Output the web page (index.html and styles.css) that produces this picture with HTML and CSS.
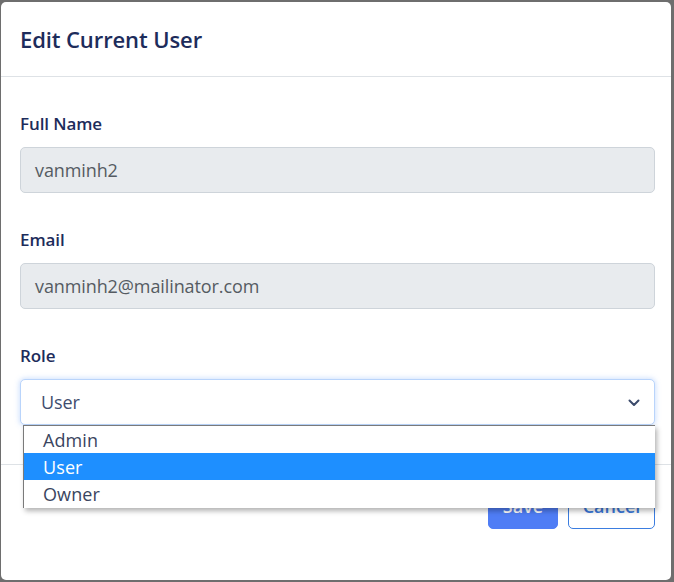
FILE: index.html
```html
<!DOCTYPE html>
<html lang="en">
<head>
<meta charset="utf-8">
<title>Edit Current User</title>
<link rel="stylesheet" href="styles.css">
</head>
<body>
<div class="modal">
  <div class="modal-header">
    <h5 class="modal-title">Edit Current User</h5>
  </div>
  <div class="modal-body">
    <div class="field">
      <label class="label">Full Name</label>
      <div class="input">vanminh2</div>
    </div>
    <div class="field">
      <label class="label">Email</label>
      <div class="input">vanminh2@mailinator.com</div>
    </div>
    <div class="field field-last">
      <label class="label">Role</label>
      <div class="select-wrap">
        <div class="select">
          <span>User</span>
          <svg class="chev" width="12" height="8" viewBox="0 0 12 8"><path d="M1.5 1.5 L6 6 L10.5 1.5" fill="none" stroke="#3b4a6b" stroke-width="2" stroke-linecap="round" stroke-linejoin="round"/></svg>
        </div>
        <ul class="options">
          <li class="opt">Admin</li>
          <li class="opt opt-active">User</li>
          <li class="opt">Owner</li>
        </ul>
      </div>
    </div>
  </div>
  <div class="modal-footer">
    <button class="btn btn-primary">Save</button>
    <button class="btn btn-outline">Cancel</button>
  </div>
</div>
</body>
</html>
```
FILE: styles.css
```css
* { box-sizing: border-box; }
html, body { margin: 0; height: 100%; }
body {
  background: #6e6e6e;
  padding: 2px 2px 2px 1px;
  font-family: "Open Sans", "Noto Sans", sans-serif;
}
.modal {
  background: #fff;
  border-radius: 5px;
  height: 578px;
  width: 670px;
  display: flex;
  flex-direction: column;
}
.modal-header {
  height: 75px;
  border-bottom: 1px solid #dee2e6;
  padding: 0 19px;
  display: flex;
  align-items: center;
}
.modal-title {
  margin: 0;
  margin-top: -1px;
  font-size: 22px;
  font-weight: 600;
  color: #1d2c5b;
  letter-spacing: -0.1px;
}
.modal-body {
  padding: 35px 16px 39px 19px;
}
.field { margin-bottom: 35px; }
.field-last { margin-bottom: 0; }
.label {
  display: block;
  font-size: 17px;
  line-height: 24px;
  font-weight: 600;
  color: #1d2c5b;
  margin-bottom: 11px;
  letter-spacing: -0.1px;
}
.input {
  height: 46px;
  background: #e8ebee;
  border: 1px solid #ced4da;
  border-radius: 5px;
  padding: 0 14px;
  display: flex;
  align-items: center;
  font-size: 18px;
  color: #555b62;
  letter-spacing: -0.1px;
}
.select-wrap { position: relative; }
.select {
  height: 46px;
  background: #fff;
  border: 1px solid #b9d4fb;
  border-radius: 5px;
  box-shadow: 0 0 5px 1px rgba(120, 170, 250, 0.35);
  padding: 0 14px 0 20px;
  display: flex;
  align-items: center;
  justify-content: space-between;
  font-size: 18px;
  color: #3f4d6e;
  letter-spacing: -0.1px;
}
.chev { margin-top: 1px; }
.options {
  position: absolute;
  left: 3px;
  top: 46px;
  width: 632px;
  margin: 0;
  padding: 0;
  list-style: none;
  background: #fff;
  border-top: 1px solid #7a7a7a;
  border-left: 1px solid #7a7a7a;
  box-shadow: 2px 3px 5px rgba(0, 0, 0, 0.3);
  padding-bottom: 1px;
}
.opt {
  height: 27px;
  line-height: 28px;
  padding-left: 19px;
  font-size: 18px;
  color: #3a4560;
  letter-spacing: 0.1px;
}
.opt-active {
  background: #1e8fff;
  color: #fff;
}
.modal-footer {
  border-top: 1px solid #dee2e6;
  padding: 17px 16px 0 19px;
  display: flex;
  justify-content: flex-end;
  gap: 10px;
}
.btn {
  height: 47px;
  border-radius: 5px;
  font-family: "Open Sans", "Noto Sans", sans-serif;
  font-size: 18px;
  font-weight: 600;
  padding: 0;
}
.btn-primary {
  width: 70px;
  background: #4f7df5;
  border: 1px solid #4f7df5;
  color: #fff;
}
.btn-outline {
  width: 87px;
  background: #fff;
  border: 1px solid #3b7de0;
  color: #3a78da;
}
```
